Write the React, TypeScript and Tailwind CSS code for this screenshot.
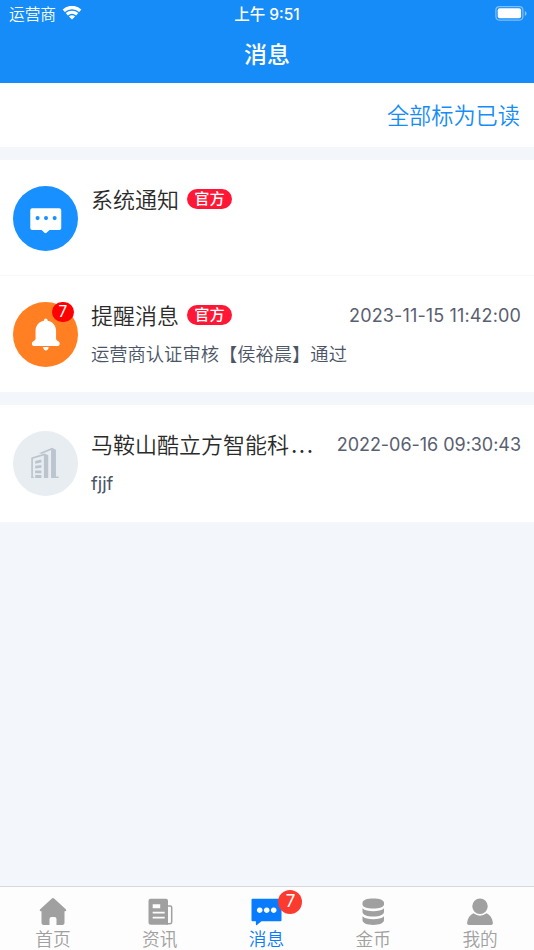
import React from 'react';

interface Message {
  id: number;
  title: string;
  shortened?: boolean;
  official?: boolean;
  time?: string;
  timeSpacing?: string;
  content?: string;
  unread?: number;
  color: string;
  height: string;
  icon: React.ReactNode;
}

interface Tab {
  label: string;
  icon: React.ReactNode;
  active?: boolean;
  badge?: number;
}

const ChatIcon = () => (
  <svg className="h-full w-full" viewBox="0 0 64 64" fill="none">
    <path
      d="M19 21.800h26.500a2 2 0 0 1 2 2v17.500a2 2 0 0 1-2 2H36L33 46q-1 .8-2 0L28.200 43.300H19a2 2 0 0 1-2-2V23.800a2 2 0 0 1 2-2z"
      fill="#fff"
    />
    <circle cx="24.200" cy="31.600" r="2" fill="#1990ff" />
    <circle cx="32.500" cy="31.600" r="2" fill="#1990ff" />
    <circle cx="41" cy="31.600" r="2" fill="#1990ff" />
  </svg>
);

const BellIcon = () => (
  <svg className="h-full w-full" viewBox="0 0 64 64" fill="#fff">
    <path d="M32.300 16.200c1 0 1.700.9 1.900 2.200 5 1 8.200 5 8.200 10v7.500c0 1.200.6 1.800 1.800 2.600l1 .6c.6.4.8 1 .8 1.700 0 1.600-.6 2.400-1.800 2.400H20.400c-1.200 0-1.800-.8-1.800-2.400 0-.7.2-1.300.8-1.700l1-.6c1.200-.8 1.800-1.400 1.800-2.600v-7.500c0-5 3.200-9 8.200-10 .2-1.300.9-2.200 1.900-2.200z" />
    <path d="M29.600 44.200h5.500c-.2 2.200-1.300 3.500-2.750 3.500S29.800 46.400 29.600 44.200z" />
  </svg>
);

const BuildingIcon = () => (
  <svg className="h-full w-full" viewBox="0 0 64 64" fill="#bcc5cd">
    <path d="M25.500 21.800L38.500 16.500 42.300 18.500v26.300H45v1.500h-7.500V18.600L28.500 22.300z" />
    <path d="M18 26.200l13-4 3.700 1.700v22.400h-4.300V24L19.600 27.300v19H18z" />
    <path d="M21.800 29.500l6.200-1.500v3l-6.200 1.300zM21.800 34.300l6.200-.9v2.900l-6.200.6zM21.800 38.800H28v2.800h-6.200zM21.800 43.300H28v3h-6.200z" />
    <path d="M18 45.100h2.500v1.200H18z" />
  </svg>
);

const WifiIcon = () => (
  <svg className="h-[15px] w-5" viewBox="0 0 20 15">
    <path d="M.6 3.500a13.800 13.800 0 0 1 18.800 0L17.200 6.100a10.800 10.800 0 0 0-14.400 0z" fill="#fff" />
    <path d="M3.700 7.100a9.300 9.300 0 0 1 12.600 0l-2.200 2.400a6.300 6.300 0 0 0-8.200 0z" fill="#fff" />
    <path d="M6.900 10.500a4.800 4.800 0 0 1 6.200 0L10 13.600z" fill="#fff" />
  </svg>
);

const BatteryIcon = () => (
  <svg className="-mt-px h-[15px] w-8" viewBox="0 0 32 15" fill="none">
    <rect x=".9" y=".6" width="27" height="13.500" rx="3.500" stroke="#fff" strokeOpacity=".45" strokeWidth="1.200" />
    <rect x="2.700" y="2.300" width="23.400" height="10" rx="2" fill="#fff" />
    <path d="M29.800 5v5c1-.4 1.700-1.300 1.700-2.500S30.800 5.400 29.800 5z" fill="#fff" fillOpacity=".5" />
  </svg>
);

const messageGroups: Message[][] = [
  [
    {
      id: 1,
      title: '系统通知',
      official: true,
      color: 'bg-[#1990ff]',
      height: 'h-[116px]',
      icon: <ChatIcon />,
    },
    {
      id: 2,
      title: '提醒消息',
      official: true,
      time: '2023-11-15 11:42:00',
      timeSpacing: 'tracking-[0.14px]',
      content: '运营商认证审核【侯裕晨】通过',
      unread: 7,
      color: 'bg-[#ff7f22]',
      height: 'h-[116px]',
      icon: <BellIcon />,
    },
  ],
  [
    {
      id: 3,
      title: '马鞍山酷立方智能科',
      shortened: true,
      time: '2022-06-16 09:30:43',
      timeSpacing: 'tracking-[-0.04px]',
      content: 'fjjf',
      color: 'bg-[#e8edf1]',
      height: 'h-[117px]',
      icon: <BuildingIcon />,
    },
  ],
];

const tabs: Tab[] = [
  {
    label: '首页',
    icon: <path d="M14.900 1.500q1.100-.8 2.200 0l11.700 10.700c.9.900.6 2-.7 2h-.6v11.900a1.800 1.800 0 0 1-1.800 1.800h-6.200V22a2 2 0 0 0-2-2h-3a2 2 0 0 0-2 2v5.900H6.300a1.800 1.800 0 0 1-1.800-1.800V14.200h-.6c-1.300 0-1.600-1.100-.7-2z" />,
  },
  {
    label: '资讯',
    icon: (
      <>
        <path
          fillRule="evenodd"
          d="M6.500 1.800H22a2 2 0 0 1 2 2v23.900H7A2.500 2.500 0 0 1 4.500 25.200V3.800a2 2 0 0 1 2-2zm2.200 5.500v4h7.500v-4zm0 7.500v1.700h12v-1.700zm0 5v1.700h12v-1.700z"
        />
        <path d="M24 9h2.200a1.500 1.500 0 0 1 1.500 1.500v14.300c0 1.300-.8 2-2 2h-3.200" fill="none" stroke="currentColor" strokeWidth="1.500" />
      </>
    ),
  },
  {
    label: '消息',
    active: true,
    badge: 7,
    icon: (
      <path
        fillRule="evenodd"
        d="M2.500 1.700h28a1 1 0 0 1 1 1v20.500a1 1 0 0 1-1 1H11.500L6.900 28q-1 .6-1-.6v-3.200H2.500a1 1 0 0 1-1-1V2.700a1 1 0 0 1 1-1zm7.200 8.700a2.800 2.800 0 1 0 .01 0zm7 0a2.800 2.800 0 1 0 .01 0zm7 0a2.800 2.800 0 1 0 .01 0z"
      />
    ),
  },
  {
    label: '金币',
    icon: (
      <>
        <path d="M5.500 6C5.500 3 10.200 1.600 16.200 1.600S27 3 27 6v1.300c0 3-4.800 4.200-10.800 4.200S5.500 10.300 5.500 7.300z" />
        <path d="M5.500 11.200c2.200 2.200 6 3 10.700 3s8.600-.8 10.800-3v3.600c0 3.200-4.800 4.800-10.800 4.800S5.500 18 5.500 14.800z" />
        <path d="M5.500 19.300c2.200 2.200 6 3 10.700 3s8.600-.8 10.800-3V23c0 3.200-4.800 4.900-10.800 4.900S5.500 26.200 5.500 23z" />
      </>
    ),
  },
  {
    label: '我的',
    icon: (
      <>
        <circle cx="16" cy="9.200" r="7.700" />
        <path d="M9.500 16.300a10 10 0 0 0 13 0c3.500 1.500 5.800 4.900 6.400 9.400.1 1.400-.6 2.200-1.800 2.200H4.900c-1.200 0-1.900-.8-1.800-2.200.6-4.500 2.900-7.900 6.400-9.400z" />
      </>
    ),
  },
];

const MessageRow: React.FC<{ message: Message }> = ({ message }) => (
  <div className={`flex px-[13px] pt-[26px] ${message.height}`}>
    <div className={`relative h-[65px] w-[65px] shrink-0 rounded-full ${message.color}`}>
      {message.icon}
      {message.unread && (
        <span className="absolute top-0 right-1 flex h-5 w-[22px] items-center justify-center rounded-full bg-[#ff0000] text-[15.500px] text-white">
          {message.unread}
        </span>
      )}
    </div>
    <div className="ml-[13px] min-w-0 flex-1">
      <div className="flex h-[27px] items-center">
        <h2 className="text-[22px] leading-[30px] whitespace-nowrap text-[#2b2b2b]">
          {message.title}
          {message.shortened && <span className="ml-0.5 tracking-[1.500px]">...</span>}
        </h2>
        {message.official && (
          <span className="mb-0.5 ml-2 flex h-5 w-[45px] items-center justify-center rounded-full bg-[#ff1735] pt-0.5 font-['Inter','Noto_Sans_CJK_SC',sans-serif] text-[15.200px] font-medium text-white">
            官方
          </span>
        )}
        {message.time && (
          <time className={`ml-auto text-[18px] whitespace-nowrap text-[#596070] ${message.timeSpacing}`}>
            {message.time}
          </time>
        )}
      </div>
      <p className="mt-3 text-[18.300px] leading-[26px] text-[#4c5566]">{message.content}</p>
    </div>
  </div>
);

const App: React.FC = () => {
  return (
    <div className="flex h-[950px] w-full flex-col overflow-hidden bg-[#f3f7fb] font-['Inter','Noto_Sans_CJK_SC_DemiLight','Noto_Sans_CJK_SC',sans-serif]">
      <header className="h-[83px] shrink-0 bg-[#168cf8] text-white">
        <div className="grid h-7 grid-cols-3 items-center pr-[7px] pl-[9px]">
          <div className="flex items-center gap-1.5">
            <span className="pt-px text-[15.700px]">运营商</span>
            <WifiIcon />
          </div>
          <span className="pt-px pr-0.5 text-center font-['Inter','Noto_Sans_CJK_SC',sans-serif] text-[15.500px] font-medium">
            上午 9:51
          </span>
          <div className="flex justify-end">
            <BatteryIcon />
          </div>
        </div>
        <h1 className="pt-[7px] text-center font-['Noto_Sans_CJK_SC',sans-serif] text-[23px] leading-9 font-medium">消息</h1>
      </header>

      <div className="flex h-16 shrink-0 items-center justify-end bg-white px-3.5 pt-px">
        <button className="text-[22.200px] text-[#168cf8]">全部标为已读</button>
      </div>

      <main className="flex flex-1 flex-col gap-[13px] pt-[13px]">
        {messageGroups.map((group) => (
          <section key={group[0].id} className="divide-y divide-[#f8f8f8] bg-white">
            {group.map((message) => (
              <MessageRow key={message.id} message={message} />
            ))}
          </section>
        ))}
      </main>

      <nav className="grid h-16 shrink-0 grid-cols-5 border-t border-[#d5d9dd] bg-[#fdfdfd]">
        {tabs.map((tab) => (
          <button
            key={tab.label}
            className={`flex flex-col items-center pt-2.5 pr-px ${tab.active ? 'text-[#087bff]' : 'text-[#a0a0a0]'}`}
          >
            <span className="relative">
              <svg className="h-[30px] w-8" viewBox="0 0 32 30" fill="currentColor">
                {tab.icon}
              </svg>
              {tab.badge && (
                <span className="absolute -top-[7px] -right-5 flex h-6 w-6 items-center justify-center rounded-full bg-[#fc3b30] text-[17px] text-white">
                  {tab.badge}
                </span>
              )}
            </span>
            <span className="text-[17.700px] leading-[25px]">{tab.label}</span>
          </button>
        ))}
      </nav>
    </div>
  );
};

export default App;
